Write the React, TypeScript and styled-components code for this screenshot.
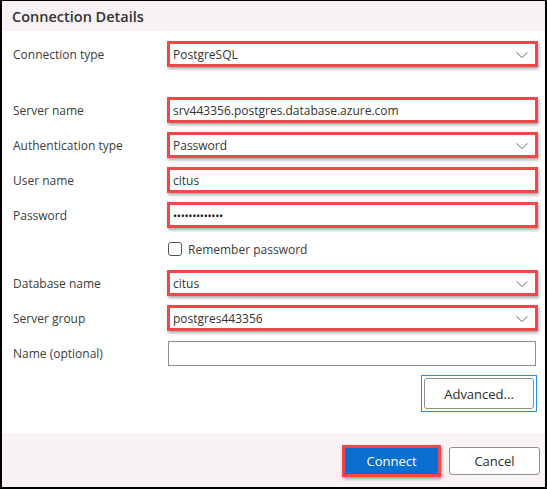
import styled, { createGlobalStyle } from 'styled-components';

const GlobalStyle = createGlobalStyle`
  html, body {
    margin: 0;
    padding: 0;
    background: #ffffff;
  }
  * {
    box-sizing: border-box;
  }
`;

function Chevron() {
	return (
		<svg width="12" height="7" viewBox="0 0 12 7">
			<path d="M0.5 0.8 L6 6 L11.5 0.8" fill="none" stroke="#6b6b6b" strokeWidth="1" />
		</svg>
	);
}

export default function App() {
	return (
		<>
			<GlobalStyle />
			<Dialog>
				<Header>Connection Details</Header>
				<Body>
					<Row>
						<Label>Connection type</Label>
						<Field>
							PostgreSQL
							<Arrow><Chevron /></Arrow>
						</Field>
					</Row>
					<Row $extra={21}>
						<Label>Server name</Label>
						<Field>srv443356.postgres.database.azure.com</Field>
					</Row>
					<Row>
						<Label>Authentication type</Label>
						<Field>
							Password
							<Arrow><Chevron /></Arrow>
						</Field>
					</Row>
					<Row>
						<Label>User name</Label>
						<Field>citus</Field>
					</Row>
					<Row>
						<Label>Password</Label>
						<Field><Dots>•••••••••••••</Dots></Field>
					</Row>
					<CheckRow>
						<span />
						<CheckLabel>
							<Box />
							Remember password
						</CheckLabel>
					</CheckRow>
					<Row>
						<Label>Database name</Label>
						<Field>
							citus
							<Arrow><Chevron /></Arrow>
						</Field>
					</Row>
					<Row>
						<Label>Server group</Label>
						<Field>
							postgres443356
							<Arrow><Chevron /></Arrow>
						</Field>
					</Row>
					<Row>
						<Label>Name (optional)</Label>
						<PlainInput />
					</Row>
					<ButtonRow>
						<span />
						<FocusRing>
							<Button>Advanced...</Button>
						</FocusRing>
					</ButtonRow>
				</Body>
				<Footer>
					<PrimaryButton>Connect</PrimaryButton>
					<CancelButton>Cancel</CancelButton>
				</Footer>
			</Dialog>
		</>
	);
}

const Dialog = styled.div`
  width: 547px;
  height: 489px;
  border: 2px solid #000;
  border-top-width: 1px;
  display: flex;
  flex-direction: column;
  font-family: "Open Sans", "Noto Sans", sans-serif;
  font-size: 12px;
  color: #3a3a3a;
  background: #fff;
`;

const Header = styled.div`
  height: 30px;
  flex-shrink: 0;
  background: #f6f2f6;
  padding: 0 0 0 10px;
  display: flex;
  align-items: center;
  font-size: 14.5px;
  font-weight: 600;
  color: #333;
`;

const Body = styled.div`
  flex: 1;
  display: flex;
  flex-direction: column;
  gap: 9px;
  padding: 10px 7px 0 11px;
`;

const Row = styled.div<{ $extra?: number }>`
  display: grid;
  grid-template-columns: 154px 1fr;
  align-items: center;
  height: 26px;
  margin-top: ${({ $extra }) => $extra ?? 0}px;
`;

const Label = styled.div`
  color: #3c3c3c;
  white-space: nowrap;
`;

const Field = styled.div`
  position: relative;
  height: 26px;
  border: 3px solid #f0474b;
  box-shadow: 1px 2px 3px rgba(0, 0, 0, 0.35);
  background: #fff;
  display: flex;
  align-items: center;
  padding: 0 0 0 3px;
  color: #333;
  white-space: nowrap;
`;

const Arrow = styled.span`
  position: absolute;
  right: 7px;
  top: 50%;
  transform: translateY(-35%);
  display: flex;
`;

const Dots = styled.span`
  font-size: 11px;
  letter-spacing: -0.3px;
  color: #111;
`;

const CheckRow = styled.div`
  display: grid;
  grid-template-columns: 154px 1fr;
  align-items: center;
  height: 24px;
`;

const CheckLabel = styled.div`
  display: flex;
  align-items: center;
  gap: 6px;
  color: #3a3a3a;
  padding-left: 1px;
`;

const Box = styled.span`
  width: 14px;
  height: 14px;
  border: 1px solid #555;
  border-radius: 3px;
  background: #fff;
`;

const PlainInput = styled.div`
  height: 25px;
  margin: 0 2px 0 1px;
  border: 1px solid #8c8c8c;
  background: #fff;
`;

const ButtonRow = styled.div`
  display: grid;
  grid-template-columns: 154px 1fr;
  justify-items: end;
`;

const FocusRing = styled.div`
  width: 116px;
  height: 37px;
  margin-right: 1px;
  border: 1px solid #2b8be0;
  padding: 2px;
  display: flex;
`;

const Button = styled.div`
  flex: 1;
  border: 1px solid #8f8f8f;
  border-radius: 3px;
  background: #fff;
  display: flex;
  align-items: center;
  justify-content: center;
  font-size: 13px;
  color: #2b2b2b;
`;

const Footer = styled.div`
  height: 54px;
  flex-shrink: 0;
  background: #f7f3f7;
  display: flex;
  align-items: center;
  justify-content: flex-end;
  gap: 8px;
  padding: 2px 5px 0 0;
`;

const PrimaryButton = styled.div`
  flex-shrink: 0;
  width: 99px;
  height: 32px;
  border: 3px solid #f0474b;
  box-shadow: 1px 2px 3px rgba(0, 0, 0, 0.35);
  background: #0b6fcf;
  color: #fff;
  font-size: 13px;
  display: flex;
  align-items: center;
  justify-content: center;
`;

const CancelButton = styled(Button)`
  flex: 0 0 91px;
  height: 28px;
`;
